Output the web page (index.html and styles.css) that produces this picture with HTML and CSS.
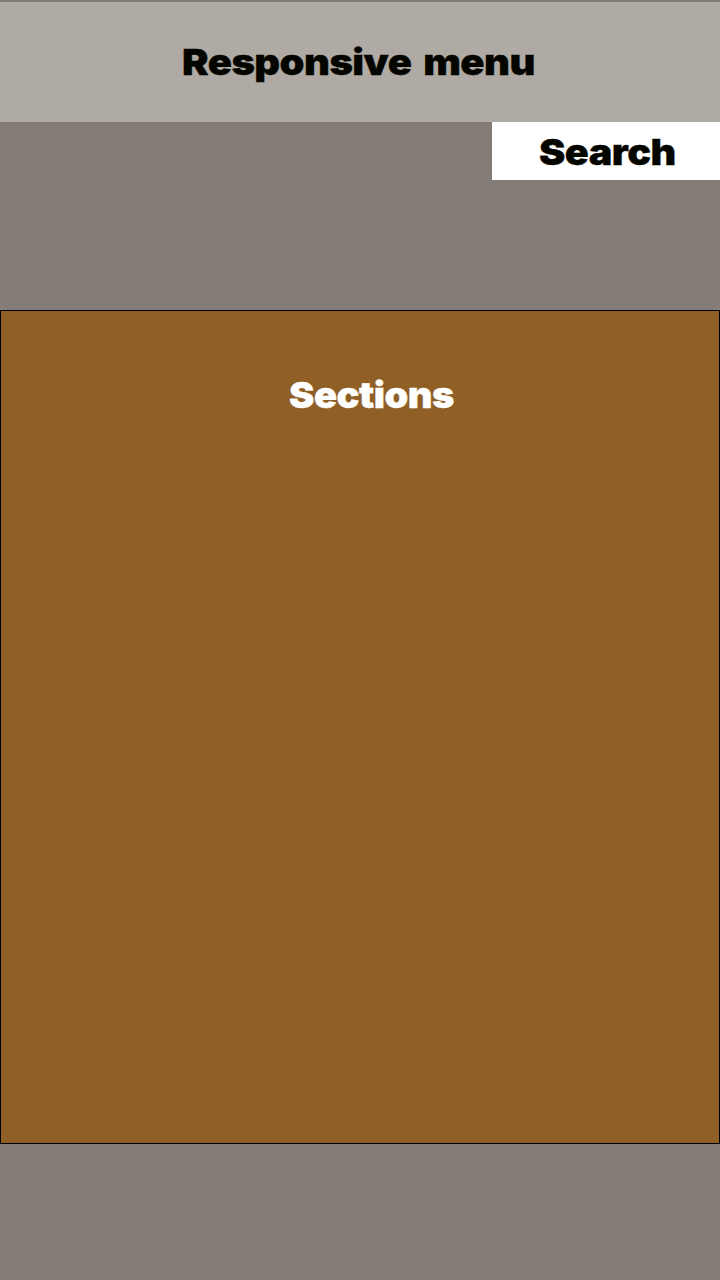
FILE: index.html
```
<!DOCTYPE html>
<html lang="en">
<head>
<meta charset="utf-8">
<title>Responsive menu</title>
<link rel="stylesheet" href="styles.css">
</head>
<body>
<header class="header"><h1 class="title">Responsive menu</h1></header>
<div class="toolbar"><button class="search"><span class="search-label">Search</span></button></div>
<main class="sections"><h2 class="sections-title">Sections</h2></main>
</body>
</html>
```

FILE: styles.css
```
* { box-sizing: border-box; }
body {
  margin: 0;
  min-height: 1280px;
  padding-top: 2px;
  background: #847c76;
  color: #050500;
}
.title, .search-label, .sections-title {
  display: block;
  width: max-content;
  margin: 0;
  font-family: Broadway, Inter, sans-serif;
  font-weight: 900;
  font-size: 36px;
  line-height: 44px;
  letter-spacing: -0.5px;
  white-space: nowrap;
  -webkit-text-stroke: 0.3px currentColor;
  transform: scaleX(1.11);
  transform-origin: left;
}
.title { word-spacing: 4px; }
.header {
  height: 120px;
  padding: 38px 0 0 182px;
  background: #afaaa3;
}
.toolbar {
  display: flex;
  justify-content: flex-end;
  height: 188px;
}
.search {
  width: 228px;
  height: 58px;
  padding: 8px 0 6px 47px;
  border: 0;
  background: #fff;
  color: #050500;
  text-align: left;
}
.search-label { transform: scaleX(1.1); }
.sections {
  height: 834px;
  padding: 62px 0 0 288px;
  border: 1px solid #000;
  background: #905f26;
  color: #fff;
}
.sections-title { transform: scaleX(1.06); }
```
